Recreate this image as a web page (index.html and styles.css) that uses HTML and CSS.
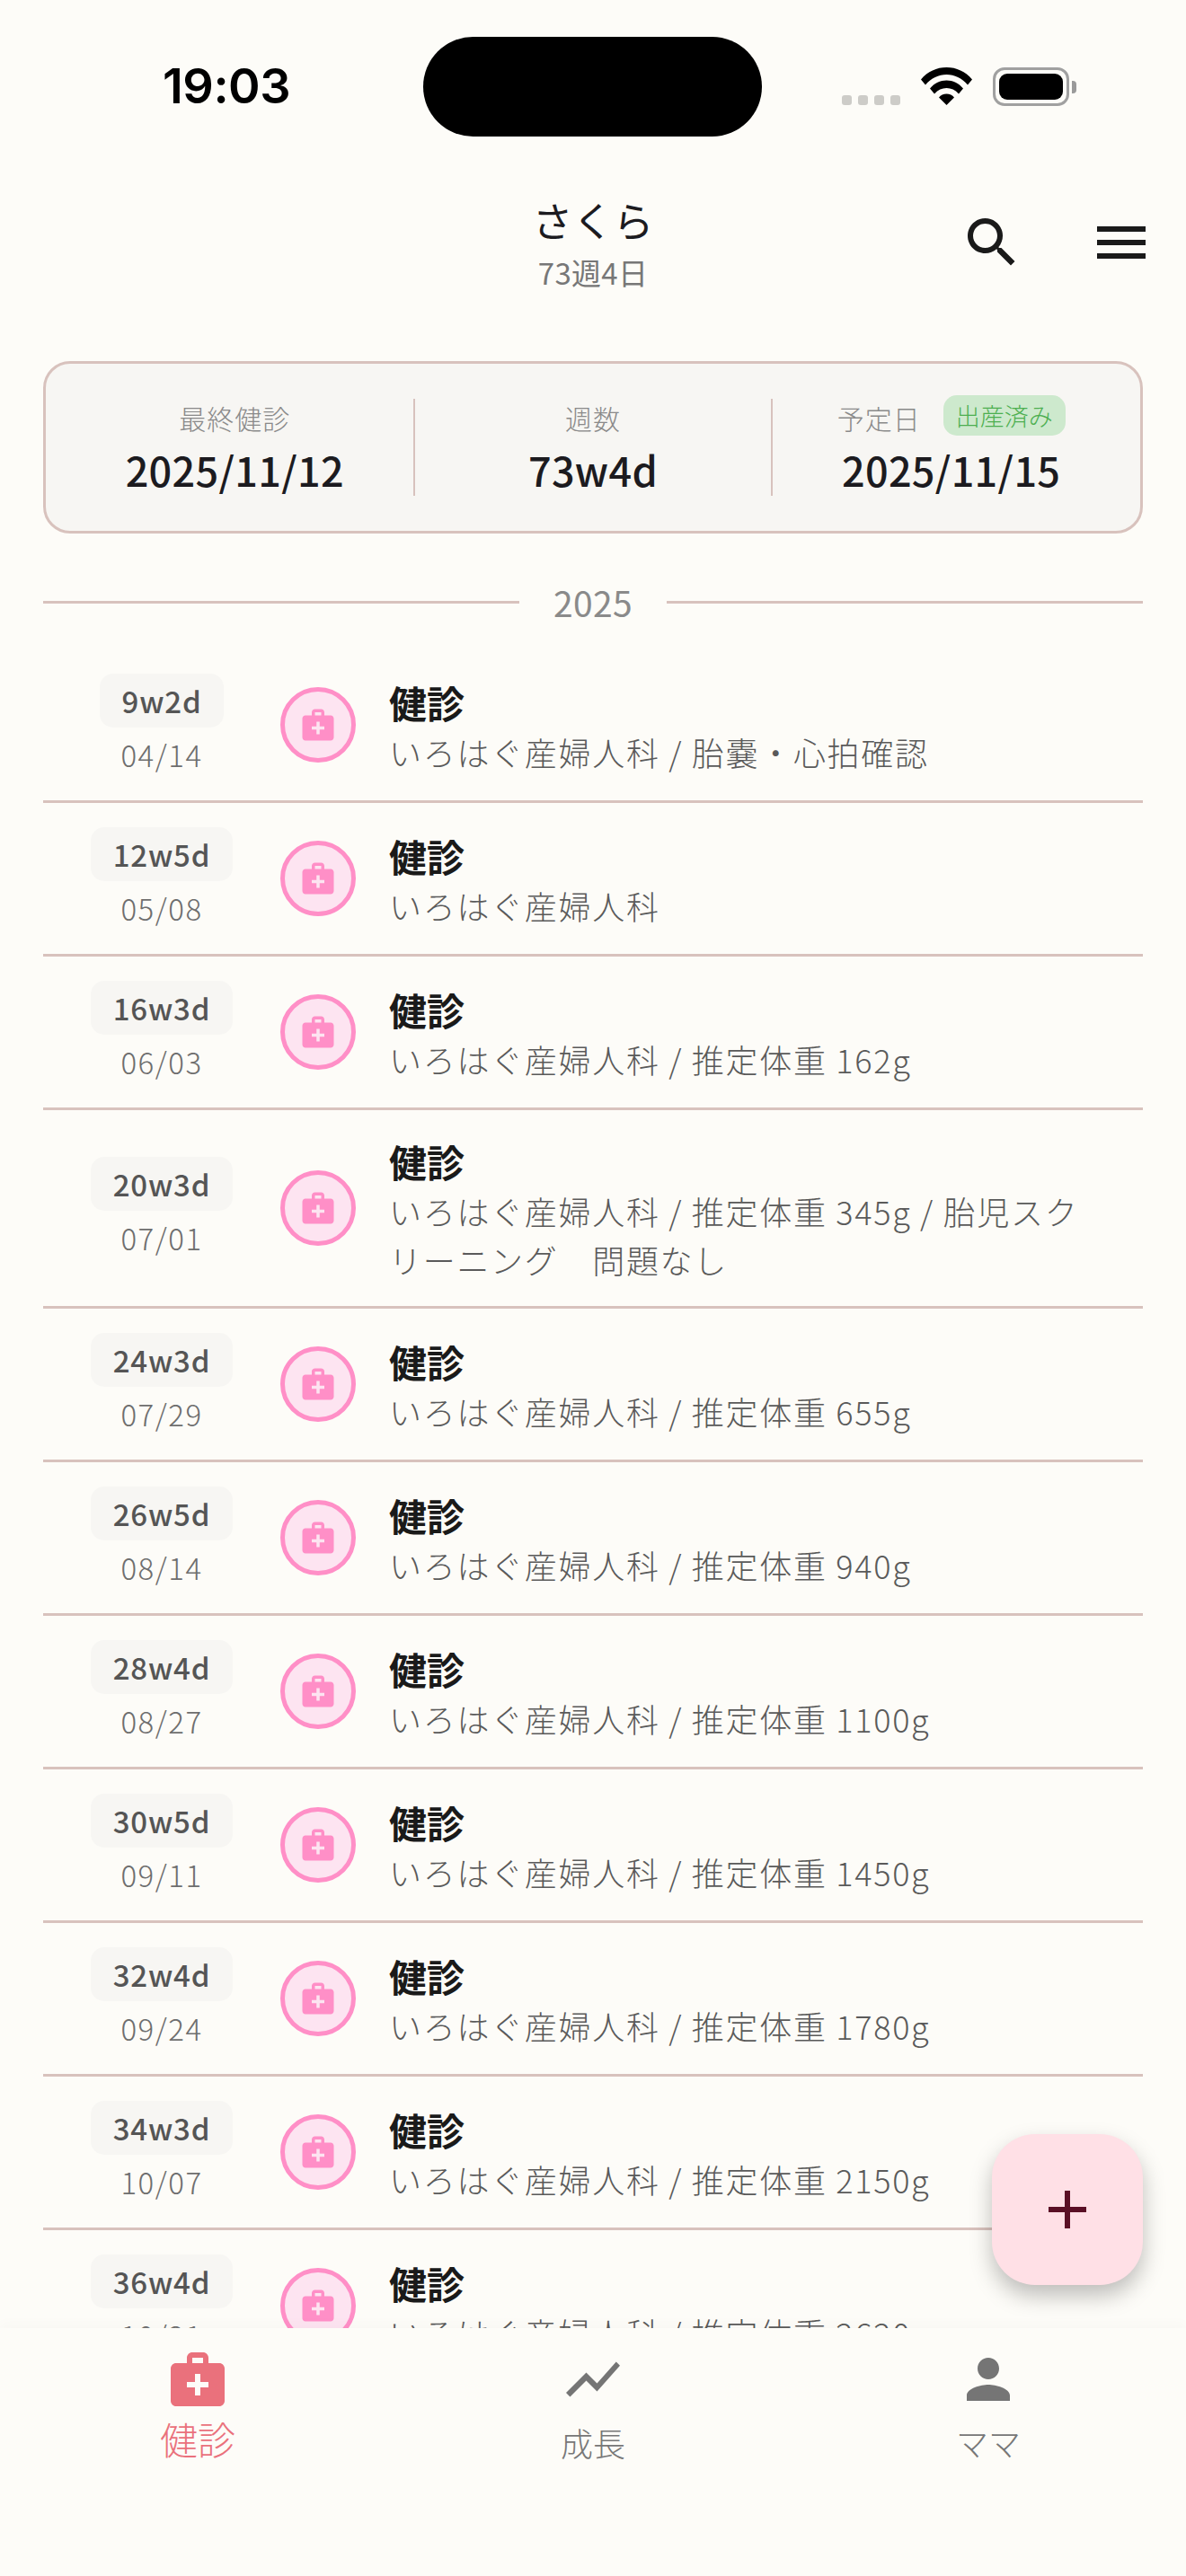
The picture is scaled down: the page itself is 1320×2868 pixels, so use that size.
FILE: index.html
```html
<!DOCTYPE html>
<html lang="ja">
<head>
<meta charset="utf-8">
<title>さくら</title>
<link rel="stylesheet" href="styles.css">
</head>
<body>
<div class="app">
  <div class="status">
    <span class="time">19:03</span>
    <div class="island"></div>
    <div class="status-right">
      <div class="dots"><i></i><i></i><i></i><i></i></div>
      <svg class="wifi" viewBox="0 0 57 42"><path d="M0 13.5C7.5 4.5 17.5 0 28.5 0S49.5 4.5 57 13.5l-5 6C45.5 12 37.5 8 28.5 8S11.5 12 5 19.5z"/><path d="M10 23.5C15 17.5 21.5 14.5 28.5 14.5S42 17.5 47 23.5l-5 6C38 25 33.5 23 28.5 23S19 25 15 29.5z"/><path d="M20 33.500C22 31 25 29.500 28.500 29.500S35 31 37 33.500L28.500 42z"/></svg>
      <div class="battery"><div class="battery-fill"></div></div>
      <div class="battery-nub"></div>
    </div>
  </div>
  <header class="header">
    <div class="titles">
      <div class="name">さくら</div>
      <div class="age">73週4日</div>
    </div>
    <div class="actions">
      <svg class="icon-72 dark" viewBox="0 0 24 24"><path d="M15.500 14h-.79l-.28-.27C15.410 12.590 16 11.110 16 9.500 16 5.910 13.090 3 9.500 3S3 5.910 3 9.500 5.910 16 9.500 16c1.610 0 3.090-.59 4.230-1.570l.27.28v.79l5 4.990L20.490 19l-4.990-5zm-6 0C7.010 14 5 11.990 5 9.500S7.010 5 9.500 5 14 7.010 14 9.500 11.990 14 9.500 14z"/></svg>
      <svg class="icon-72 dark" viewBox="0 0 24 24"><path d="M3 18h18v-2H3v2zm0-5h18v-2H3v2zm0-7v2h18V6H3z"/></svg>
    </div>
  </header>
  <main class="content">
    <section class="summary">
      <div class="cell"><div class="label-row"><span class="label">最終健診</span></div><div class="value">2025/11/12</div></div>
      <div class="rule"></div>
      <div class="cell"><div class="label-row"><span class="label">週数</span></div><div class="value">73w4d</div></div>
      <div class="rule"></div>
      <div class="cell"><div class="label-row"><span class="label">予定日</span><span class="tag">出産済み</span></div><div class="value">2025/11/15</div></div>
    </section>
    <div class="year"><span class="year-line"></span><span class="year-text">2025</span><span class="year-line"></span></div>
    <ul class="list">
      <li class="row"><div class="when"><span class="chip">9w2d</span><span class="date">04/14</span></div><div class="badge"><svg viewBox="0 0 24 24"><use href="#med"/></svg></div><div class="body"><div class="title">健診</div><div class="sub">いろはぐ産婦人科 / 胎嚢・心拍確認</div></div></li>
      <li class="row"><div class="when"><span class="chip">12w5d</span><span class="date">05/08</span></div><div class="badge"><svg viewBox="0 0 24 24"><use href="#med"/></svg></div><div class="body"><div class="title">健診</div><div class="sub">いろはぐ産婦人科</div></div></li>
      <li class="row"><div class="when"><span class="chip">16w3d</span><span class="date">06/03</span></div><div class="badge"><svg viewBox="0 0 24 24"><use href="#med"/></svg></div><div class="body"><div class="title">健診</div><div class="sub">いろはぐ産婦人科 / 推定体重 162g</div></div></li>
      <li class="row"><div class="when"><span class="chip">20w3d</span><span class="date">07/01</span></div><div class="badge"><svg viewBox="0 0 24 24"><use href="#med"/></svg></div><div class="body"><div class="title">健診</div><div class="sub">いろはぐ産婦人科 / 推定体重 345g / 胎児スク<br>リーニング　問題なし</div></div></li>
      <li class="row"><div class="when"><span class="chip">24w3d</span><span class="date">07/29</span></div><div class="badge"><svg viewBox="0 0 24 24"><use href="#med"/></svg></div><div class="body"><div class="title">健診</div><div class="sub">いろはぐ産婦人科 / 推定体重 655g</div></div></li>
      <li class="row"><div class="when"><span class="chip">26w5d</span><span class="date">08/14</span></div><div class="badge"><svg viewBox="0 0 24 24"><use href="#med"/></svg></div><div class="body"><div class="title">健診</div><div class="sub">いろはぐ産婦人科 / 推定体重 940g</div></div></li>
      <li class="row"><div class="when"><span class="chip">28w4d</span><span class="date">08/27</span></div><div class="badge"><svg viewBox="0 0 24 24"><use href="#med"/></svg></div><div class="body"><div class="title">健診</div><div class="sub">いろはぐ産婦人科 / 推定体重 1100g</div></div></li>
      <li class="row"><div class="when"><span class="chip">30w5d</span><span class="date">09/11</span></div><div class="badge"><svg viewBox="0 0 24 24"><use href="#med"/></svg></div><div class="body"><div class="title">健診</div><div class="sub">いろはぐ産婦人科 / 推定体重 1450g</div></div></li>
      <li class="row"><div class="when"><span class="chip">32w4d</span><span class="date">09/24</span></div><div class="badge"><svg viewBox="0 0 24 24"><use href="#med"/></svg></div><div class="body"><div class="title">健診</div><div class="sub">いろはぐ産婦人科 / 推定体重 1780g</div></div></li>
      <li class="row"><div class="when"><span class="chip">34w3d</span><span class="date">10/07</span></div><div class="badge"><svg viewBox="0 0 24 24"><use href="#med"/></svg></div><div class="body"><div class="title">健診</div><div class="sub">いろはぐ産婦人科 / 推定体重 2150g</div></div></li>
      <li class="row"><div class="when"><span class="chip">36w4d</span><span class="date">10/21</span></div><div class="badge"><svg viewBox="0 0 24 24"><use href="#med"/></svg></div><div class="body"><div class="title">健診</div><div class="sub">いろはぐ産婦人科 / 推定体重 2620g</div></div></li>
    </ul>
  </main>
  <button class="fab" type="button"><span class="plus"></span></button>
  <nav class="tabs">
    <div class="tab active"><svg class="icon-72" viewBox="0 0 24 24"><use href="#med"/></svg><span>健診</span></div>
    <div class="tab"><svg class="icon-72" viewBox="0 0 24 24"><path d="M3.500 18.490l6-6.010 4 4L22 6.920l-1.410-1.410-7.090 7.970-4-4L2 16.990z"/></svg><span>成長</span></div>
    <div class="tab"><svg class="icon-72" viewBox="0 0 24 24"><path d="M12 12c2.210 0 4-1.790 4-4s-1.790-4-4-4-4 1.790-4 4 1.790 4 4 4zm0 2c-2.670 0-8 1.340-8 4v2h16v-2c0-2.660-5.330-4-8-4z"/></svg><span>ママ</span></div>
  </nav>
</div>
<svg class="defs" width="0" height="0"><defs><path id="med" d="M20 6h-4V4c0-1.100-.9-2-2-2h-4c-1.100 0-2 .9-2 2v2H4c-1.100 0-2 .9-2 2v12c0 1.100.9 2 2 2h16c1.100 0 2-.9 2-2V8c0-1.100-.9-2-2-2zM10 4h4v2h-4V4zm6 11h-3v3h-2v-3H8v-2h3v-3h2v3h3v2z"/></defs></svg>
</body>
</html>
```
FILE: styles.css
```css
* { box-sizing: border-box; }
html, body { margin: 0; padding: 0; }
body { width: 1320px; height: 2868px; overflow: hidden; background: #fdfcf8; font-family: "Noto Sans CJK JP", "Noto Sans", sans-serif; color: #1c1b1f; }
.app { position: relative; width: 1320px; height: 2868px; display: flex; flex-direction: column; overflow: hidden; }
.defs { position: absolute; }

.status { height: 190px; flex: none; display: flex; align-items: flex-start; padding: 41px 0 0 181px; }
.time { width: 139px; margin-top: 25px; font: 600 54px/60px Inter, "Liberation Sans", sans-serif; letter-spacing: -.5px; color: #000; white-space: nowrap; }
.island { width: 377px; height: 111px; margin-left: 151px; border-radius: 56px; background: #000; }
.status-right { margin: 34px 0 0 89px; display: flex; align-items: flex-start; }
.dots { display: flex; gap: 7px; margin-top: 31px; }
.dots i { display: block; width: 11px; height: 11px; border-radius: 3px; background: #cdccc8; }
.wifi { width: 57px; height: 42px; margin-left: 23px; fill: #000; }
.battery { width: 85px; height: 43px; margin-left: 23px; padding: 4px; border: 3px solid #a0a0a0; border-radius: 13px; }
.battery-fill { width: 100%; height: 100%; background: #000; border-radius: 9px; }
.battery-nub { width: 5px; height: 14px; margin: 15px 0 0 3px; background: #9a9a9a; border-radius: 0 4px 4px 0; }

.header { height: 212px; flex: none; position: relative; }
.titles { text-align: center; padding-top: 27px; }
.name { font-size: 45px; line-height: 56px; color: #1c1b1f; }
.age { font-size: 33px; line-height: 48px; margin-top: 6px; color: #777; letter-spacing: .3px; }
.actions { position: absolute; top: 44px; right: 36px; display: flex; gap: 72px; }
.icon-72 { width: 72px; height: 72px; display: block; fill: currentColor; }
.dark { color: #1a1a1a; }

.content { flex: 1; min-height: 0; overflow: hidden; padding: 0 48px; }
.summary { height: 192px; display: flex; align-items: center; padding: 0 12px; background: #f7f6f3; border: 3px solid #d8c2bd; border-radius: 30px; }
.cell { flex: 1; min-width: 0; text-align: center; }
.rule { width: 2px; height: 108px; flex: none; background: #d8c2bd; }
.label-row { height: 50px; display: flex; align-items: center; justify-content: center; gap: 25px; }
.label { font-size: 30px; color: #8a8a8a; line-height: 48px; font-weight: 300; letter-spacing: 1px; }
.tag { height: 45px; padding: 0 14px; align-self: flex-start; border-radius: 15px; background: #cde9cd; color: #4caf50; font-size: 27px; line-height: 45px; font-weight: 300; }
.value { font-size: 45px; line-height: 66px; font-weight: 500; letter-spacing: .3px; color: #1c1b1f; }

.year { display: flex; align-items: center; height: 84px; margin-top: 34px; gap: 38px; }
.year-line { flex: 1; height: 3px; background: #d8c2bd; }
.year-text { font-size: 39px; color: #8a8a8a; line-height: 54px; letter-spacing: .3px; }

.list { list-style: none; margin: 11px 0 0; padding: 0; }
.row { display: flex; align-items: center; min-height: 171px; border-bottom: 3px solid #d8c2bd; }
.when { width: 264px; flex: none; display: flex; flex-direction: column; align-items: center; gap: 6px; }
.chip { height: 60px; padding: 0 25px; border-radius: 15px; background: #f7f6f3; color: #555; font-size: 33px; font-weight: 500; line-height: 60px; letter-spacing: .8px; }
.date { font-size: 33px; line-height: 48px; color: #6e6e6e; font-weight: 300; letter-spacing: 1.5px; }
.badge { width: 84px; height: 84px; flex: none; border: 5px solid #ff8fc7; border-radius: 50%; background: #fde4f1; display: flex; align-items: center; justify-content: center; }
.badge svg { width: 42px; height: 42px; fill: #ff8fc7; }
.body { margin-left: 37px; flex: 1; min-width: 0; padding: 29px 0 25px; }
.title { font-size: 42px; line-height: 56px; font-weight: 700; color: #1a1a1a; }
.sub { font-size: 36px; line-height: 54px; color: #5a5a5a; letter-spacing: 1.7px; white-space: nowrap; font-weight: 300; }

.fab { position: absolute; left: 1104px; top: 2376px; width: 168px; height: 168px; border: 0; padding: 0; border-radius: 48px; background: #ffe0e6; box-shadow: 0 12px 24px rgba(0,0,0,.25); display: flex; align-items: center; justify-content: center; }
.plus { position: relative; display: block; width: 42px; height: 42px; }
.plus::before, .plus::after { content: ""; position: absolute; background: #5a0f25; }
.plus::before { left: 0; right: 0; top: 18px; height: 6px; }
.plus::after { top: 0; bottom: 0; left: 18px; width: 6px; }

.tabs { position: relative; height: 276px; flex: none; display: flex; background: #fdfcf8; padding-top: 21px; box-shadow: 0 -6px 12px rgba(0,0,0,.02); }
.tab { width: 440px; display: flex; flex-direction: column; align-items: center; color: #757575; font-size: 36px; line-height: 54px; }
.tab span { margin-top: 7px; color: #777; font-weight: 300; }
.tab.active { color: #ea717c; }
.tab.active span { font-size: 42px; line-height: 56px; margin-top: 2px; color: #ea717c; }
```
